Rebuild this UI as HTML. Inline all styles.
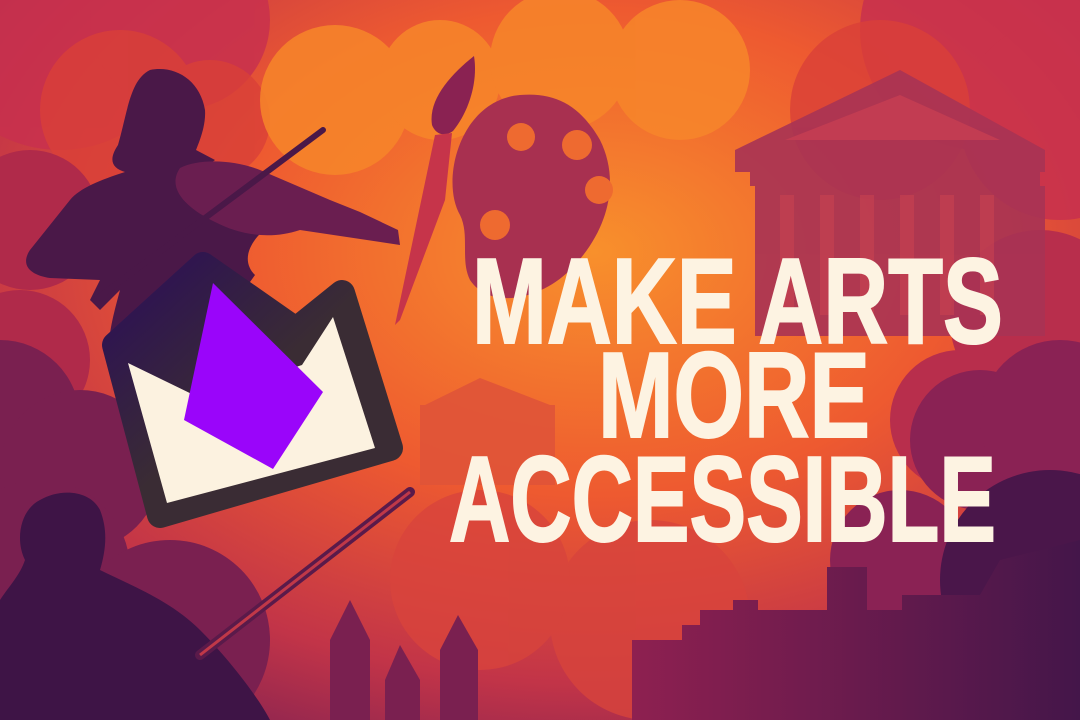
<!DOCTYPE html>
<html><head><meta charset="utf-8"><style>
html,body{margin:0;padding:0;width:1080px;height:720px;overflow:hidden;background:#e85a30}
svg{display:block}
</style></head><body>
<svg width="1080" height="720" viewBox="0 0 1080 720" xmlns="http://www.w3.org/2000/svg">
<defs>
<radialGradient id="bg" cx="0.55" cy="0.35" r="0.75">
<stop offset="0" stop-color="#f8902c"/>
<stop offset="0.45" stop-color="#ee5a30"/>
<stop offset="0.8" stop-color="#c23448"/>
<stop offset="1" stop-color="#8a2450"/>
</radialGradient>
<linearGradient id="city" x1="0" y1="0" x2="1" y2="0">
<stop offset="0" stop-color="#8e2050"/><stop offset="1" stop-color="#44164a"/>
</linearGradient>
<linearGradient id="lg" x1="0" y1="0" x2="1" y2="1">
<stop offset="0" stop-color="#2c0e58"/><stop offset="0.5" stop-color="#3a2c34"/>
</linearGradient>
</defs>
<rect width="1080" height="720" fill="url(#bg)"/>
<g fill="#c8304e" opacity="0.85">
<circle cx="60" cy="20" r="130"/><circle cx="180" cy="20" r="90"/>
<circle cx="980" cy="30" r="120"/><circle cx="1060" cy="120" r="100"/>
</g>
<g fill="#d94038" opacity="0.8">
<circle cx="120" cy="110" r="80"/><circle cx="210" cy="120" r="60"/>
<circle cx="880" cy="110" r="90"/>
</g>
<g fill="#f7862a" opacity="0.85">
<circle cx="335" cy="100" r="75"/><circle cx="440" cy="80" r="60"/>
<circle cx="560" cy="60" r="70"/><circle cx="680" cy="70" r="70"/>
</g>
<g fill="#b02a4a">
<circle cx="30" cy="220" r="70"/><circle cx="20" cy="360" r="70"/>
</g>
<g fill="#7a2050">
<circle cx="0" cy="420" r="80"/><circle cx="80" cy="470" r="80"/>
<circle cx="40" cy="570" r="90"/><circle cx="170" cy="640" r="100"/>
</g>
<g fill="#b82e4c">
<circle cx="1040" cy="320" r="90"/><circle cx="960" cy="420" r="70"/>
</g>
<g fill="#8a2254">
<circle cx="980" cy="440" r="70"/><circle cx="1060" cy="420" r="80"/>
<circle cx="900" cy="560" r="70"/>
</g>
<g fill="#d8443c" opacity="0.8">
<circle cx="650" cy="620" r="100"/><circle cx="480" cy="580" r="90"/>
</g>
<circle cx="1050" cy="580" r="110" fill="#4a164a"/>
<g fill="#a83354" opacity="0.9">
<polygon points="735,150 900,70 1045,150"/>
<rect x="735" y="150" width="310" height="22"/>
<rect x="750" y="172" width="290" height="14"/>
<rect x="755" y="186" width="290" height="150"/>
</g>
<polygon points="785,140 900,95 1000,140" fill="#c23c52"/>
<g fill="#c94250" opacity="0.6">
<rect x="780" y="195" width="14" height="120"/><rect x="820" y="195" width="14" height="120"/>
<rect x="860" y="195" width="14" height="120"/><rect x="900" y="195" width="14" height="120"/>
<rect x="940" y="195" width="14" height="120"/><rect x="980" y="195" width="14" height="120"/>
</g>
<g fill="#e05438" opacity="0.9">
<polygon points="425,405 480,378 550,405"/>
<rect x="420" y="405" width="135" height="80"/>
</g>
<path d="M520,95 C460,100 440,180 460,215 C470,235 460,260 470,280 C490,310 540,300 570,270 C610,230 620,180 600,140 C580,105 555,92 520,95Z" fill="#a83050"/>
<g fill="#ee6a30">
<circle cx="521" cy="137" r="14"/><circle cx="577" cy="145" r="15"/>
<circle cx="599" cy="190" r="14"/><circle cx="495" cy="225" r="15"/>
</g>
<path d="M474,56 C450,75 428,100 432,125 C436,135 445,137 453,131 C470,110 478,80 474,56Z" fill="#8a2252"/>
<path d="M435,135 L452,133 L445,200 L400,320 L395,325 Z" fill="#c6344a"/>
<g fill="#4a1848">
<path d="M150,70 C175,65 200,80 205,110 C206,125 200,140 196,150 L215,160 L195,175 C180,178 170,175 125,172 C112,168 108,160 118,145 C128,110 130,80 150,70Z"/>
<path d="M125,172 C100,180 80,188 70,200 L30,250 C20,265 30,275 50,278 L100,280 L90,300 L100,310 L120,290 C112,320 105,345 112,365 L140,360 C170,345 200,330 230,310 L255,275 C240,260 250,240 270,225 L215,200 L200,172 Z"/>
</g>
<path d="M180,168 C200,158 235,160 260,170 L330,200 L360,212 L398,230 L400,245 L300,230 C270,240 240,235 215,222 C190,210 165,190 180,168Z" fill="#6a1e50"/>
<line x1="95" y1="300" x2="323" y2="130" stroke="#4a1848" stroke-width="6" stroke-linecap="round"/>
<g fill="#3e1446">
<path d="M40,500 C60,488 90,490 100,510 C108,530 106,550 100,570 C130,585 170,600 200,630 C230,660 260,700 270,720 L0,720 L0,600 C10,585 20,575 25,560 C15,540 20,510 40,500Z"/>
</g>
<line x1="200" y1="655" x2="410" y2="492" stroke="#5a1a4a" stroke-width="10" stroke-linecap="round"/>
<line x1="200" y1="655" x2="410" y2="492" stroke="#c03848" stroke-width="3"/>
<g fill="#7a2050">
<polygon points="330,640 350,600 370,640 370,720 330,720"/>
<polygon points="385,680 400,645 420,680 420,720 385,720"/>
<polygon points="440,650 458,615 478,650 478,720 440,720"/>
</g>
<path d="M632,640 L682,640 L682,625 L700,625 L700,610 L733,610 L733,600 L758,600 L758,610 L827,610 L827,567 L867,567 L867,610 L902,610 L902,595 L980,595 L1000,560 L1080,540 L1080,720 L632,720 Z" fill="url(#city)"/>
<path d="M115,345 L203,265 L296,330 L342,293 L390,448 L160,515 Z" fill="url(#lg)" stroke="url(#lg)" stroke-width="26" stroke-linejoin="round"/>
<polygon points="128,363 200,398 302,365 333,317 375,448 167,503" fill="#fcf2e0"/>
<polygon points="213,283 323,392 273,469 184,420" fill="#9a05fa"/>
<g fill="#fdf3e2" stroke="#fdf3e2" stroke-width="2" font-family="'Liberation Sans',sans-serif" font-weight="bold" font-size="122">
<text x="472" y="343" textLength="531" lengthAdjust="spacingAndGlyphs">MAKE ARTS</text>
<text x="598" y="437" textLength="272" lengthAdjust="spacingAndGlyphs">MORE</text>
<text x="449" y="541" textLength="547" lengthAdjust="spacingAndGlyphs">ACCESSIBLE</text>
</g>
</svg>
</body></html>
